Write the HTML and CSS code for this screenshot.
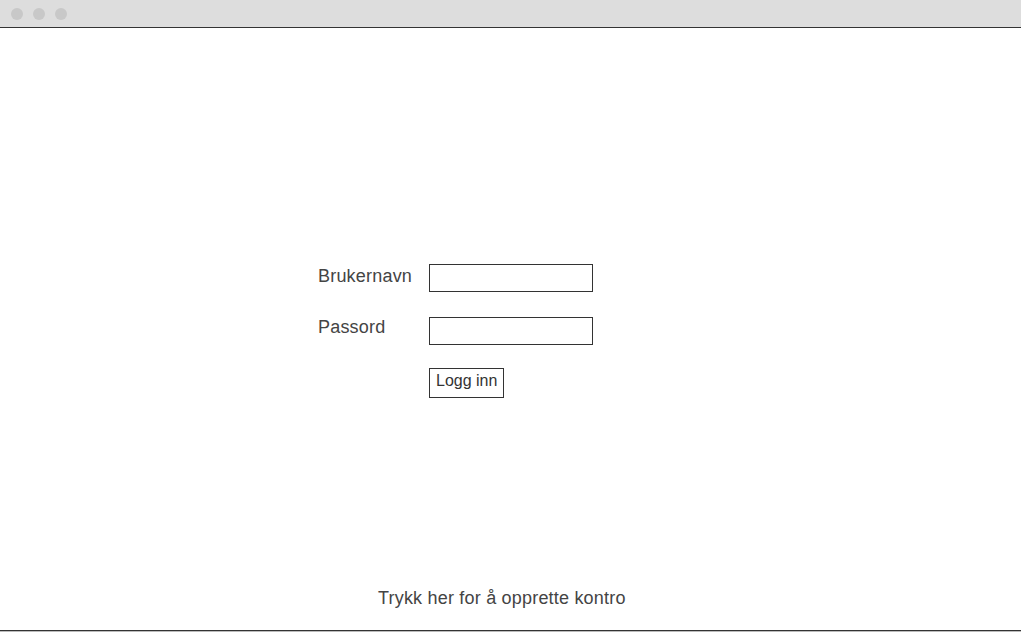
FILE: index.html
```html
<!DOCTYPE html>
<html lang="no">
<head>
<meta charset="utf-8">
<title>Logg inn</title>
<link rel="stylesheet" href="styles.css">
</head>
<body>
<div class="window">
  <div class="titlebar">
    <span class="dot"></span><span class="dot"></span><span class="dot"></span>
  </div>
  <main class="content">
    <form class="login">
      <label class="label label-user" for="user">Brukernavn</label>
      <input class="field" id="user" type="text">
      <label class="label label-pass" for="pass">Passord</label>
      <input class="field" id="pass" type="password">
      <span></span>
      <div><button class="btn" type="button">Logg inn</button></div>
    </form>
    <a class="signup" href="#">Trykk her for å opprette kontro</a>
  </main>
  <div class="bottom"></div>
</div>
</body>
</html>
```

FILE: styles.css
```css
html, body {
  margin: 0;
  padding: 0;
  background: #ffffff;
}
body {
  font-family: "Liberation Sans", Arial, sans-serif;
  color: #444444;
}
.window {
  width: 1021px;
  height: 632px;
  display: flex;
  flex-direction: column;
}
.titlebar {
  height: 27px;
  background: #dddddd;
  border-bottom: 1px solid #333333;
  display: flex;
  align-items: center;
  gap: 10px;
  padding-left: 11px;
  flex-shrink: 0;
}
.dot {
  width: 12px;
  height: 12px;
  border-radius: 50%;
  background: #c8c8c8;
}
.content {
  flex: 1;
  display: flex;
  flex-direction: column;
  align-items: flex-start;
}
.login {
  margin: 236px 0 0 318px;
  display: grid;
  grid-template-columns: 111px 164px;
  row-gap: 25px;
}
.label {
  font-size: 18px;
  line-height: 20px;
  letter-spacing: 0.2px;
}
.label-user {
  padding-top: 2px;
}
.field {
  box-sizing: border-box;
  width: 164px;
  height: 28px;
  border: 1px solid #333333;
  border-radius: 0;
  margin: 0;
  padding: 0 4px;
  background: #ffffff;
  outline: none;
}
.login > span {
  height: 0;
}
.login > div {
  margin-top: -2px;
}
.btn {
  font-family: "Liberation Sans", Arial, sans-serif;
  font-size: 16px;
  line-height: 18px;
  color: #333333;
  background: #ffffff;
  border: 1px solid #333333;
  border-radius: 0;
  padding: 3px 6px 7px 6px;
  margin: 0;
  height: 30px;
  display: block;
}
.signup {
  margin: auto 0 22px 378px;
  font-size: 18px;
  line-height: 20px;
  letter-spacing: 0.2px;
  color: #444444;
  text-decoration: none;
}
.bottom {
  height: 1px;
  border-top: 1px solid #333333;
  background: #bbbbbb;
  flex-shrink: 0;
}
```
